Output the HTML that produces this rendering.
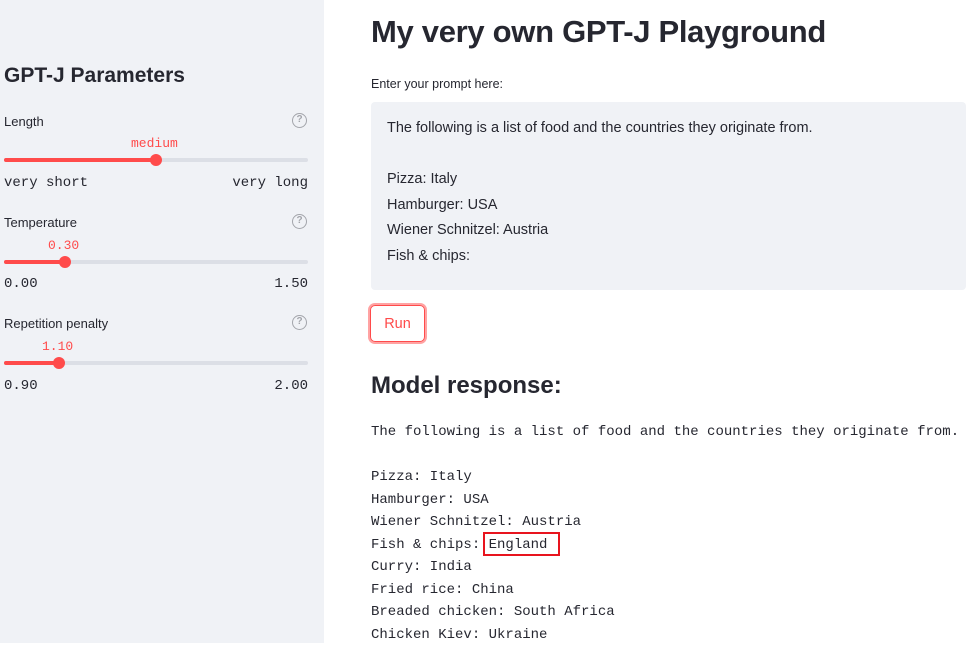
<!DOCTYPE html>
<html><head><style>
*{margin:0;padding:0;box-sizing:border-box}
body{width:966px;height:643px;overflow:hidden;background:#fff;font-family:"Liberation Sans",sans-serif;color:#262730;position:relative}
.sb{position:absolute;left:0;top:0;width:324px;height:643px;background:#f0f2f6}
.a{position:absolute;white-space:nowrap}
.mono{font-family:"Liberation Mono",monospace}
.track{position:absolute;left:4px;width:304px;height:4px;border-radius:2px;background:#dcdfe6}
.fill{position:absolute;left:0;top:0;height:4px;background:#ff4b4b;border-radius:2px}
.th{position:absolute;width:12px;height:12px;border-radius:6px;background:#ff4b4b;top:-4px}
.q{position:absolute;left:292px;width:15px;height:15px;border:1.5px solid #a3a5ab;border-radius:50%;color:#a3a5ab;font-size:10px;font-weight:bold;text-align:center;line-height:12px}
.lab{font-size:13px;color:#262730}
.val{font-size:13px;color:#ff4b4b}
.tick{font-size:14px;color:#262730}
.resp{font-size:14px;line-height:22.5px;color:#262730}
</style></head><body>
<div class="sb">
<div class="a" style="left:4px;top:64px;font-size:21px;font-weight:bold">GPT-J Parameters</div>

<div class="a lab" style="left:4px;top:114px">Length</div>
<div class="q" style="top:113px">?</div>
<div class="a mono val" style="left:131px;top:136px">medium</div>
<div class="track" style="top:158px"><div class="fill" style="width:152px"></div><div class="th" style="left:146px"></div></div>
<div class="a mono tick" style="left:4px;top:175px">very short</div>
<div class="a mono tick" style="right:16px;top:175px">very long</div>

<div class="a lab" style="left:4px;top:215px">Temperature</div>
<div class="q" style="top:214px">?</div>
<div class="a mono val" style="left:48px;top:238px">0.30</div>
<div class="track" style="top:260px"><div class="fill" style="width:61px"></div><div class="th" style="left:55px"></div></div>
<div class="a mono tick" style="left:4px;top:276px">0.00</div>
<div class="a mono tick" style="right:16px;top:276px">1.50</div>

<div class="a lab" style="left:4px;top:316px">Repetition penalty</div>
<div class="q" style="top:315px">?</div>
<div class="a mono val" style="left:42px;top:339px">1.10</div>
<div class="track" style="top:361px"><div class="fill" style="width:55px"></div><div class="th" style="left:49px"></div></div>
<div class="a mono tick" style="left:4px;top:378px">0.90</div>
<div class="a mono tick" style="right:16px;top:378px">2.00</div>
</div>

<div class="a" style="left:371px;top:14px;font-size:31px;font-weight:bold;letter-spacing:-0.3px">My very own GPT-J Playground</div>
<div class="a" style="left:371px;top:77px;font-size:12.5px">Enter your prompt here:</div>
<div class="a" style="left:371px;top:102px;width:595px;height:188px;background:#f0f2f6;border-radius:4px"></div>
<div class="a" style="left:387px;top:116px;font-size:14.5px;line-height:25.5px">The following is a list of food and the countries they originate from.<br><br>Pizza: Italy<br>Hamburger: USA<br>Wiener Schnitzel: Austria<br>Fish &amp; chips:</div>

<div class="a" style="left:370px;top:305px;width:55px;height:37px;border:1px solid #ff4b4b;box-shadow:0 0 0 2px #ffa3a3;border-radius:5px;color:#ff4b4b;font-size:14.5px;text-align:center;line-height:37px">Run</div>

<div class="a" style="left:371px;top:372px;font-size:24px;font-weight:bold">Model response:</div>
<div class="a mono resp" style="left:371px;top:421px">The following is a list of food and the countries they originate from.<br><br>Pizza: Italy<br>Hamburger: USA<br>Wiener Schnitzel: Austria<br>Fish &amp; chips: England<br>Curry: India<br>Fried rice: China<br>Breaded chicken: South Africa<br>Chicken Kiev: Ukraine</div>
<div class="a" style="left:483px;top:532px;width:77px;height:24px;border:2px solid #e8141e"></div>
</body></html>
